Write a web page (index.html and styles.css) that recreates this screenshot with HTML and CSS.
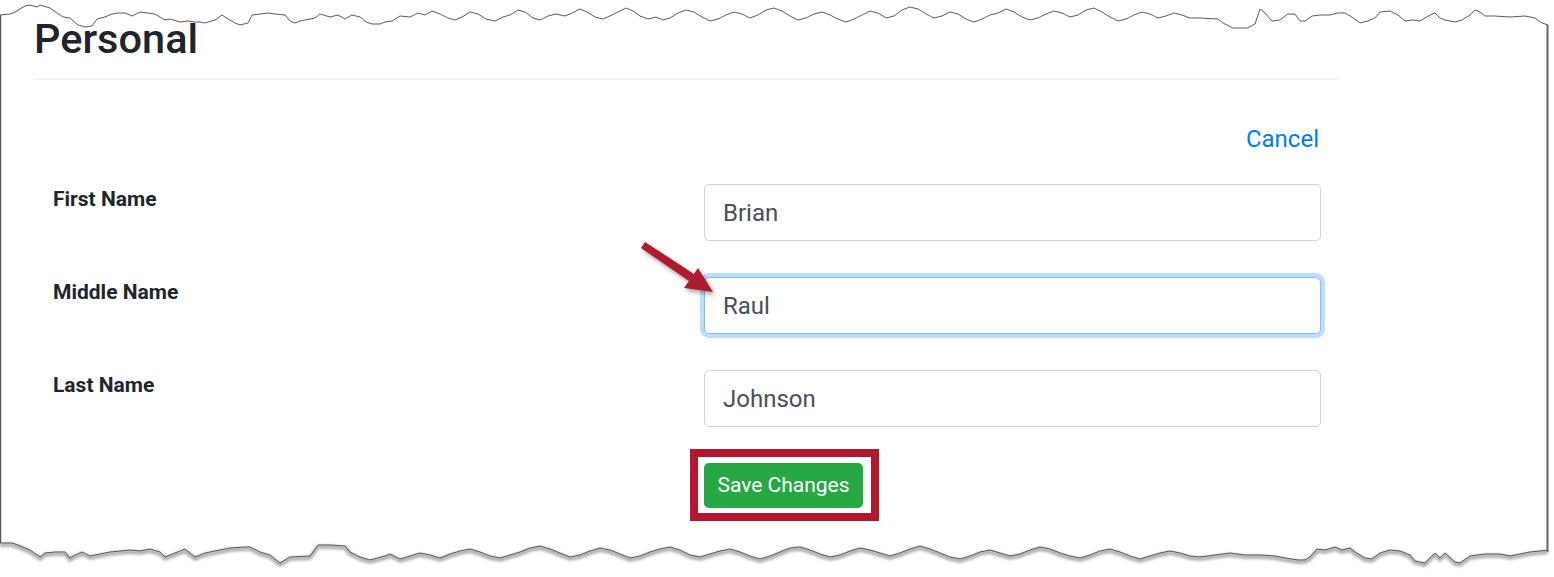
FILE: index.html
```html
<!DOCTYPE html>
<html lang="en">
<head>
<meta charset="utf-8">
<title>Personal</title>
<link rel="stylesheet" href="styles.css">
</head>
<body>
<div class="page">
  <h2 class="title">Personal</h2>
  <hr class="rule">
  <div class="actions"><a class="cancel" href="#">Cancel</a></div>
  <form class="form">
    <div class="row">
      <label class="label" for="first">First Name</label>
      <input class="input" id="first" type="text" value="Brian">
    </div>
    <div class="row">
      <label class="label" for="middle">Middle Name</label>
      <input class="input input-focus" id="middle" type="text" value="Raul">
    </div>
    <div class="row">
      <label class="label" for="last">Last Name</label>
      <input class="input" id="last" type="text" value="Johnson">
    </div>
    <div class="row row-submit">
      <span></span>
      <div class="highlight"><button class="btn" type="button">Save Changes</button></div>
    </div>
  </form>
</div>

<svg class="frame" width="1554" height="577" viewBox="0 0 1554 577" xmlns="http://www.w3.org/2000/svg">
  <defs>
    <filter id="edgeShadow" x="-5%" y="-50%" width="110%" height="300%">
      <feGaussianBlur stdDeviation="1.6"/>
    </filter>
  </defs>
  <line x1="0.5" y1="15" x2="0.5" y2="543" stroke="#555" stroke-width="1.5"/>
  <line x1="1547.5" y1="25" x2="1547.5" y2="552" stroke="#666" stroke-width="2"/>
  <polyline fill="none" stroke="#5a5a5a" stroke-width="1" points="0,15 10,14 15,12 25,6 30,5 37,7 40,5 50,8 57,13 63,17 70,18 78,25 85,27 92,26 97,19 105,17 112,14 118,13 125,13 132,16 140,12 155,14 160,17 165,20 170,19 180,22 188,21 195,22 200,22 205,23 215,20 222,15 228,19 235,23 240,25 248,23 252,15 260,14 268,13 275,14 285,15 290,21 295,23 300,21 305,20 315,18 320,14 330,17 338,15 345,19 352,15 360,17 366,22 372,24 380,24 385,22 392,21 400,16 410,17 418,13 425,15 432,11 440,14 448,18 455,20 462,17 470,12 478,14 486,19 495,21 503,17 510,15 518,10 525,12 533,18 540,20 548,16 556,14 565,16 572,13 580,9 587,12 595,17 603,19 610,16 618,12 626,8 633,11 640,16 648,19 656,17 663,20 670,18 678,13 686,10 694,12 702,17 710,21 718,19 726,15 734,12 742,14 750,18 758,15 766,10 774,8 782,11 790,16 798,20 806,18 814,14 822,12 830,15 838,19 846,22 854,19 862,15 870,11 878,13 886,18 894,16 902,10 910,7 918,9 926,14 934,18 942,16 950,12 958,14 966,19 974,22 982,19 990,15 998,13 1006,9 1014,12 1022,17 1030,20 1038,18 1046,14 1054,11 1062,13 1070,17 1078,15 1086,10 1094,8 1102,12 1110,17 1118,21 1126,19 1134,15 1142,12 1150,14 1158,18 1166,16 1174,13 1182,15 1190,18 1200,18 1218,19 1223,23 1233,28 1247,28 1255,24 1260,9 1265,13 1272,21 1280,20 1288,14 1295,14 1300,21 1305,21 1312,16 1320,15 1330,15 1338,13 1345,13 1352,17 1360,23 1368,21 1375,18 1380,12 1390,11 1398,15 1405,21 1413,20 1420,21 1430,15 1435,13 1440,18 1445,20 1455,22 1462,20 1470,15 1475,10 1480,12 1485,16 1495,16 1510,17 1525,16 1535,18 1540,22 1545,24 1548,25"/>
  <g transform="translate(0,2)" opacity="0.75" filter="url(#edgeShadow)">
    <polyline fill="none" stroke="#777" stroke-width="3" points="0,543 12,543 18,545 30,550 40,557 45,553 55,552 65,552 70,558 75,555 82,552 90,556 100,554 110,552 120,551 130,550 140,551 150,549 160,552 165,557 175,553 185,549 195,557 205,553 215,551 230,548 245,547 250,547 260,552 270,555 280,563 290,557 310,556 318,545 330,545 345,546 350,552 360,557 370,560 385,556 390,554 400,559 410,556 420,553 430,555 440,558 450,554 460,551 470,549 480,552 490,556 500,558 510,555 520,552 530,548 540,546 550,549 560,553 570,557 580,555 590,551 600,548 610,550 620,554 630,558 640,556 650,552 660,549 670,547 680,550 690,555 700,557 710,554 720,551 730,549 740,552 750,556 760,559 770,556 780,552 790,548 800,547 810,550 820,554 830,557 840,555 850,551 860,548 870,550 880,553 890,556 900,553 910,549 920,546 930,549 940,553 950,557 960,559 970,556 980,552 990,550 1000,553 1010,556 1020,554 1030,550 1040,547 1050,549 1060,553 1070,556 1080,558 1090,555 1100,551 1110,549 1120,552 1130,556 1140,559 1150,556 1160,553 1170,551 1180,553 1190,556 1200,557 1215,555 1230,553 1245,555 1260,555 1275,556 1285,558 1298,560 1305,560 1310,557 1317,549 1325,550 1335,547 1342,550 1350,548 1355,552 1365,558 1372,559 1380,553 1390,550 1400,551 1410,555 1415,561 1425,563 1430,558 1435,553 1440,558 1445,553 1455,562 1460,563 1470,556 1485,554 1500,554 1510,556 1520,554 1530,552 1540,551 1548,550"/>
  </g>
  <polyline fill="none" stroke="#555" stroke-width="1" points="0,543 12,543 18,545 30,550 40,557 45,553 55,552 65,552 70,558 75,555 82,552 90,556 100,554 110,552 120,551 130,550 140,551 150,549 160,552 165,557 175,553 185,549 195,557 205,553 215,551 230,548 245,547 250,547 260,552 270,555 280,563 290,557 310,556 318,545 330,545 345,546 350,552 360,557 370,560 385,556 390,554 400,559 410,556 420,553 430,555 440,558 450,554 460,551 470,549 480,552 490,556 500,558 510,555 520,552 530,548 540,546 550,549 560,553 570,557 580,555 590,551 600,548 610,550 620,554 630,558 640,556 650,552 660,549 670,547 680,550 690,555 700,557 710,554 720,551 730,549 740,552 750,556 760,559 770,556 780,552 790,548 800,547 810,550 820,554 830,557 840,555 850,551 860,548 870,550 880,553 890,556 900,553 910,549 920,546 930,549 940,553 950,557 960,559 970,556 980,552 990,550 1000,553 1010,556 1020,554 1030,550 1040,547 1050,549 1060,553 1070,556 1080,558 1090,555 1100,551 1110,549 1120,552 1130,556 1140,559 1150,556 1160,553 1170,551 1180,553 1190,556 1200,557 1215,555 1230,553 1245,555 1260,555 1275,556 1285,558 1298,560 1305,560 1310,557 1317,549 1325,550 1335,547 1342,550 1350,548 1355,552 1365,558 1372,559 1380,553 1390,550 1400,551 1410,555 1415,561 1425,563 1430,558 1435,553 1440,558 1445,553 1455,562 1460,563 1470,556 1485,554 1500,554 1510,556 1520,554 1530,552 1540,551 1548,550"/>
</svg>

<svg class="arrow" width="1554" height="577" viewBox="0 0 1554 577" xmlns="http://www.w3.org/2000/svg">
  <defs>
    <filter id="arrowShadow" x="-30%" y="-30%" width="160%" height="160%">
      <feDropShadow dx="2" dy="3" stdDeviation="2" flood-color="#000" flood-opacity="0.35"/>
    </filter>
  </defs>
  <g filter="url(#arrowShadow)" fill="#ac1a2f">
    <polygon points="641,248 645,242 694,274 689,281"/>
    <polygon points="684,288 698,268 713,292"/>
  </g>
</svg>
</body>
</html>
```

FILE: styles.css
```css
html, body {
  margin: 0;
  padding: 0;
  background: #ffffff;
  overflow: hidden;
}

body {
  font-family: Roboto, "Liberation Sans", Arial, sans-serif;
  color: #212529;
}

.page {
  width: 1304px;
  margin-left: 34px;
  padding-top: 15px;
}

.title {
  margin: 0;
  font-size: 41.5px;
  font-weight: 500;
  line-height: 48px;
  color: #212529;
}

.rule {
  margin: 16px 0 0;
  border: 0;
  border-top: 1px solid #e9ecef;
  height: 0;
}

.actions {
  display: flex;
  justify-content: flex-end;
  margin-top: 41px;
  padding-right: 19px;
}

.cancel {
  font-size: 24px;
  line-height: 36px;
  color: #007bff;
  text-decoration: none;
}

.form {
  margin: 27px 0 0;
  padding: 0 17px 0 19px;
  display: flex;
  flex-direction: column;
  gap: 36px;
}

.row {
  display: grid;
  grid-template-columns: 1fr 617px;
  align-items: start;
}

.label {
  font-size: 21px;
  font-weight: 700;
  line-height: 30px;
  color: #212529;
}

.input {
  box-sizing: border-box;
  width: 100%;
  height: 57px;
  margin: 0;
  padding: 0 18px;
  border: 1px solid #ced4da;
  border-radius: 5px;
  background: #ffffff;
  font-family: Roboto, "Liberation Sans", Arial, sans-serif;
  font-size: 24px;
  color: #495057;
  outline: none;
}

.input-focus {
  border-color: #80bdff;
  box-shadow: 0 0 0 4px rgba(0, 123, 255, 0.25);
}

.row-submit {
  margin-top: -14px;
}

.highlight {
  justify-self: start;
  margin-left: -14px;
  padding: 6px 8px 5px 6px;
  border: 8px solid #b3172d;
}

.btn {
  display: block;
  box-sizing: border-box;
  width: 159px;
  height: 45px;
  padding: 0 12px;
  border: 0;
  border-radius: 5px;
  background: #28a745;
  color: #ffffff;
  font-family: Roboto, "Liberation Sans", Arial, sans-serif;
  font-size: 21px;
  line-height: 45px;
  white-space: nowrap;
  cursor: pointer;
}

.frame,
.arrow {
  position: absolute;
  top: 0;
  left: 0;
  pointer-events: none;
}
```
